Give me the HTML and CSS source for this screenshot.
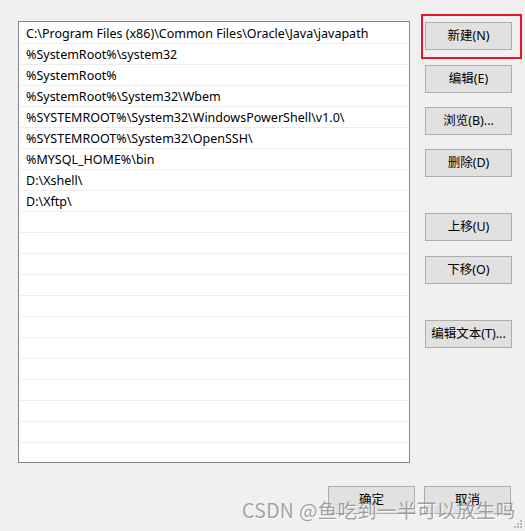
FILE: index.html
```html
<!DOCTYPE html>
<html lang="zh-CN">
<head>
<meta charset="utf-8">
<title>编辑环境变量</title>
<link rel="stylesheet" href="styles.css">
</head>
<body>
<div class="window">
  <div class="main">
    <div class="list">
      <div class="row">C:\Program Files (x86)\Common Files\Oracle\Java\javapath</div>
      <div class="row">%SystemRoot%\system32</div>
      <div class="row">%SystemRoot%</div>
      <div class="row">%SystemRoot%\System32\Wbem</div>
      <div class="row">%SYSTEMROOT%\System32\WindowsPowerShell\v1.0\</div>
      <div class="row">%SYSTEMROOT%\System32\OpenSSH\</div>
      <div class="row">%MYSQL_HOME%\bin</div>
      <div class="row">D:\Xshell\</div>
      <div class="row">D:\Xftp\</div>
      <div class="row"></div>
      <div class="row"></div>
      <div class="row"></div>
      <div class="row"></div>
      <div class="row"></div>
      <div class="row"></div>
      <div class="row"></div>
      <div class="row"></div>
      <div class="row"></div>
      <div class="row"></div>
      <div class="row"></div>
      <div class="row"></div>
    </div>
    <div class="side">
      <div class="highlight">
        <button class="btn">新建(N)</button>
      </div>
      <button class="btn gap-s">编辑(E)</button>
      <button class="btn gap-s">浏览(B)...</button>
      <button class="btn gap-s">删除(D)</button>
      <button class="btn gap-l">上移(U)</button>
      <button class="btn gap-s">下移(O)</button>
      <button class="btn gap-l">编辑文本(T)...</button>
    </div>
  </div>
  <div class="footer">
    <button class="btn">确定</button>
    <button class="btn">取消</button>
  </div>
  <div class="watermark">CSDN @鱼吃到一半可以放生吗</div>
  <svg class="grip" width="10" height="10" viewBox="0 0 10 10">
    <rect x="7" y="1" width="2" height="2" fill="#b8b8b8"/>
    <rect x="4" y="4" width="2" height="2" fill="#b8b8b8"/>
    <rect x="7" y="4" width="2" height="2" fill="#b8b8b8"/>
    <rect x="1" y="7" width="2" height="2" fill="#b8b8b8"/>
    <rect x="4" y="7" width="2" height="2" fill="#b8b8b8"/>
    <rect x="7" y="7" width="2" height="2" fill="#b8b8b8"/>
  </svg>
</div>
</body>
</html>
```
FILE: styles.css
```css
* { box-sizing: border-box; }
html, body {
  margin: 0;
  padding: 0;
  background: #f0f0f0;
}
body {
  font-family: "Noto Sans", "Noto Sans CJK SC", sans-serif;
  font-size: 12.5px;
  color: #000;
}
.window {
  position: relative;
  width: 525px;
  height: 531px;
  overflow: hidden;
}
.main {
  display: flex;
  padding: 21px 0 0 18px;
}
.list {
  width: 392px;
  height: 442px;
  border: 1px solid #828790;
  background: #fff;
  padding: 1px;
  overflow: hidden;
}
.row {
  height: 21px;
  border-bottom: 1px solid #ececec;
  padding-left: 6px;
  padding-top: 1px;
  line-height: 19px;
  white-space: nowrap;
  overflow: hidden;
}
.side {
  display: flex;
  flex-direction: column;
  margin-left: 15px;
  padding-top: 1px;
}
.btn {
  width: 87px;
  height: 28px;
  border: 1px solid #adadad;
  background: #e1e1e1;
  font-family: "Noto Sans", "Noto Sans CJK SC", sans-serif;
  font-size: 12.5px;
  color: #000;
  padding: 0;
  margin: 0;
  line-height: 26px;
}
.highlight {
  position: relative;
}
.highlight::after {
  content: "";
  position: absolute;
  left: -4px;
  top: -8px;
  width: 97px;
  height: 41px;
  border: 2px solid #e5182a;
}
.gap-s { margin-top: 15px; }
.gap-l { margin-top: 36px; }
.gap-s + .gap-s { margin-top: 14px; }
.footer {
  display: flex;
  gap: 9px;
  justify-content: flex-end;
  padding: 23px 14px 0 0;
}
.watermark {
  position: absolute;
  left: 242px;
  top: 497px;
  font-family: "Noto Sans CJK SC", "Noto Sans", sans-serif;
  font-size: 19.5px;
  line-height: 25px;
  letter-spacing: 0.3px;
  color: rgba(125, 125, 125, 0.7);
  text-shadow: 1px 1px 0 rgba(255, 255, 255, 0.8);
  white-space: nowrap;
}
.grip {
  position: absolute;
  right: 2px;
  bottom: 2px;
}
```
